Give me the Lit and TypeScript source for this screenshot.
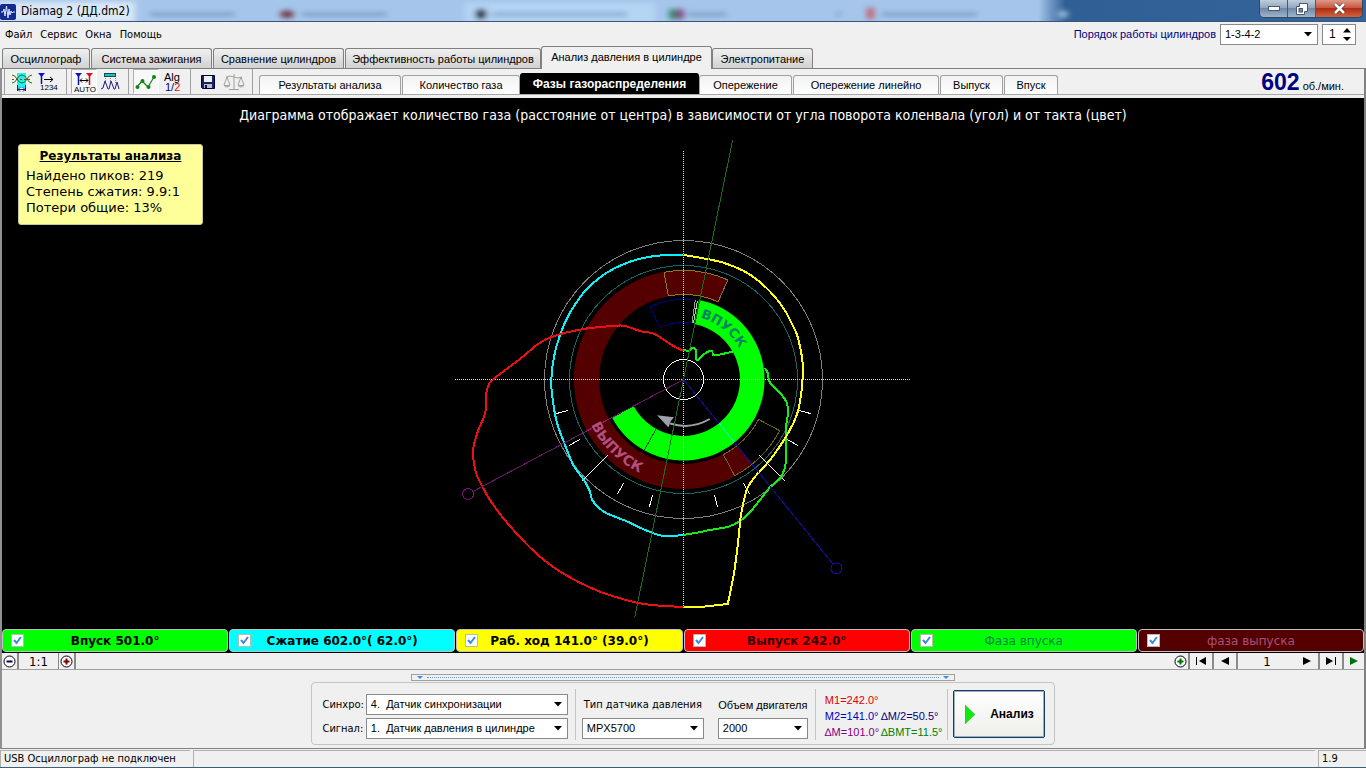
import { LitElement, html, svg, css } from "lit";
import { customElement, property, state } from "lit/decorators.js";
import { classMap } from "lit/directives/class-map.js";

type Pt = [number, number];

const CX = 683.5;
const CY = 379.5;

/** Point at a crank angle, measured clockwise from top dead centre. */
function polar(angle: number, r: number): Pt {
  const a = (angle * Math.PI) / 180;
  return [CX + r * Math.sin(a), CY - r * Math.cos(a)];
}
const fmt = (p: Pt) => `${p[0].toFixed(1)} ${p[1].toFixed(1)}`;

/** Ring sector between two angles, drawn clockwise from `from` to `to`. */
function sector(from: number, to: number, rIn: number, rOut: number): string {
  const large = to - from > 180 ? 1 : 0;
  return (
    `M${fmt(polar(from, rOut))}A${rOut} ${rOut} 0 ${large} 1 ${fmt(polar(to, rOut))}` +
    `L${fmt(polar(to, rIn))}A${rIn} ${rIn} 0 ${large} 0 ${fmt(polar(from, rIn))}Z`
  );
}

/** Smooth curve through measured points (Catmull-Rom to Bezier). */
function curve(pts: Pt[]): string {
  let d = `M${fmt(pts[0])}`;
  for (let i = 0; i < pts.length - 1; i++) {
    const p0 = pts[Math.max(i - 1, 0)];
    const p1 = pts[i];
    const p2 = pts[i + 1];
    const p3 = pts[Math.min(i + 2, pts.length - 1)];
    const c1: Pt = [p1[0] + (p2[0] - p0[0]) / 6, p1[1] + (p2[1] - p0[1]) / 6];
    const c2: Pt = [p2[0] - (p3[0] - p1[0]) / 6, p2[1] - (p3[1] - p1[1]) / 6];
    d += `C${fmt(c1)} ${fmt(c2)} ${fmt(p2)}`;
  }
  return d;
}

const EXHAUST: Pt[] = [
  [683.5, 350.7], [673.3, 346], [656.7, 335], [648.3, 332.3], [640, 331], [625, 326], [616.7, 325.7],
  [593.3, 327.7], [581.7, 329.3], [561.7, 333.7], [546.7, 339], [536.7, 345], [520, 359], [493.3, 379.3],
  [488.3, 386], [486, 395], [485.7, 410], [482.7, 420], [478.3, 430], [473.3, 448.3], [473.7, 461.7],
  [476.7, 475], [483.3, 488.3], [490, 500], [506.7, 522.3], [535, 552.3], [556.7, 569.3], [580, 582.7],
  [600, 591.7], [620, 598.3], [640, 603.3], [663.3, 606], [683.5, 606.7],
];
const POWER: Pt[] = [
  [727.7, 604], [728.6, 600], [734, 573.3], [738.7, 536.7], [740.7, 516.7], [744, 500], [747.3, 488.3],
  [755, 476.7], [770, 460], [784, 440], [793.3, 423.3], [798.3, 410], [801.7, 390], [802.7, 376.7],
  [802.7, 363.3], [800.7, 350], [796.7, 334], [790, 320], [784, 309], [773.3, 295], [758.3, 280.7],
  [743.3, 270.7], [723.3, 262.7], [703.3, 258.3], [683.5, 255],
];
const COMPRESSION: Pt[] = [
  [683.5, 255], [661.7, 255.3], [640, 258.7], [623.3, 264.3], [606.7, 272.7], [590, 285.7], [580, 297.3],
  [568.3, 315.7], [560, 335], [554, 356.7], [551.3, 379.3], [552.3, 396.7], [556.7, 421.7], [565, 445],
  [573.3, 465], [583.3, 479], [589.3, 490], [592.3, 500], [598.3, 507.3], [606.7, 513.3], [626.7, 521.3],
  [640, 527.7], [658.3, 535], [670, 536], [683.5, 535],
];
const INTAKE_OUTER: Pt[] = [
  [683.5, 535], [696.7, 532.7], [710, 530], [728.3, 526.7], [740, 521], [748.3, 514], [760, 500],
  [770, 487.3], [780, 478.3], [784.7, 468.3], [786, 456.7], [785.7, 430], [788, 413.3], [786.7, 402.7],
  [780, 392.7], [770, 382.7], [767.3, 371.7], [764.3, 367.7],
];
const INTAKE_INNER: Pt[] = [
  [734, 351.3], [715, 355.3], [712.3, 351.7], [710, 350.7], [701.7, 356], [698.3, 360], [696.3, 359],
  [696, 350], [692.7, 348], [688.3, 350.7], [683.5, 350],
];

@customElement("phase-diagram")
class PhaseDiagram extends LitElement {
  static styles = css`
    :host { display: block; min-height: 0; }
    .plot { display: block; width: 100%; height: 100%; }
    .thin { fill: none; stroke-width: 1; shape-rendering: crispEdges; }
    .trace { fill: none; stroke-width: 2; shape-rendering: crispEdges; }
    .ring-text { font: bold 13px "DejaVu Sans", Verdana, sans-serif; }
    .ring-text.big { font-size: 14px; }
  `;

  private tick(angle: number) {
    const long = angle === 135 || angle === 225;
    return this.ray(angle, long ? 107 : 120, long ? 144 : 132, "#fff");
  }

  private ray(angle: number, r1: number, r2: number, color: string) {
    const [x1, y1] = polar(angle, r1);
    const [x2, y2] = polar(angle, r2);
    return svg`<line class="thin" stroke=${color} x1=${x1} y1=${y1} x2=${x2} y2=${y2}></line>`;
  }

  render() {
    const [m1x, m1y] = polar(242, 244);
    const [m2x, m2y] = polar(141, 243);
    return html`
      <svg class="plot" viewBox="400 98 566 530" preserveAspectRatio="xMidYMin meet" role="img" aria-label="Фазы газораспределения">
        <defs>
          <path id="arc-in" d="M${fmt(polar(0, 64))}A64 64 0 0 1 ${fmt(polar(120, 64))}"></path>
          <path id="arc-out" d="M${fmt(polar(280, 103))}A103 103 0 0 0 ${fmt(polar(160, 103))}"></path>
        </defs>
        <path d=${sector(141, 384, 84.5, 109.5)} fill="#550000"></path>
        <path d=${sector(11, 242, 56.5, 81)} fill="#00ff00"></path>
        <circle class="thin" stroke="#808080" cx=${CX} cy=${CY} r="139"></circle>
        <circle class="thin" stroke="#1c6464" cx=${CX} cy=${CY} r="114"></circle>
        <path class="thin" stroke="#867a28" d=${sector(-10.3, 24, 85, 109)}></path>
        <path class="thin" stroke="#6b6222" d=${sector(118, 152, 85, 109)}></path>
        <path class="thin" stroke="#000080" d=${sector(-24.7, 8.5, 57, 80)}></path>
        ${this.ray(8.5, 57, 80, "#7fb07f")} ${this.ray(10, 57, 80, "#a0d0a0")}
        ${this.ray(209, 57, 81, "#004400")}
        ${[105, 120, 135, 150, 165, 195, 210, 225, 240, 255].map((a) => this.tick(a))}
        <line class="thin" x1="683.5" y1="151" x2="683.5" y2="608" stroke="#e0e0e0" stroke-dasharray="1 1"></line>
        <line class="thin" x1="455" y1="379.5" x2="911" y2="379.5" stroke="#e0e0e0" stroke-dasharray="1 1"></line>
        <circle class="thin" stroke="#fff" cx=${CX} cy=${CY} r="20"></circle>
        <path d="M709.7 419Q691 430 670 423.5" fill="none" stroke="#a0a0a8" stroke-width="2"></path>
        <path d="M657 415.3L674 417.2L670.5 421.5L668.5 427.5Z" fill="#a0a0a8"></path>
        <path class="trace" stroke="#14ee14" d=${curve(INTAKE_OUTER)}></path>
        <path class="trace" stroke="#14ee14" d=${curve(INTAKE_INNER)}></path>
        <path class="trace" stroke="#10f0f8" d=${curve(COMPRESSION)}></path>
        <path class="trace" stroke="#ffff20" d=${"M683.5 606.7L703.3 606.7L727.7 604" + curve(POWER).slice(1).replace(/^[\d.]+ [\d.]+/, "")}></path>
        <path class="trace" stroke="#ee1010" d=${curve(EXHAUST)}></path>
        ${this.ray(11.6, 0, 244, "#1d6b1d")} ${this.ray(191.6, 0, 243, "#1d6b1d")}
        ${this.ray(242, 0, 239, "#6a1a6a")} ${this.ray(141, 0, 238, "#1010a0")}
        ${this.ray(242, 84.5, 109.5, "#a01070")} ${this.ray(141, 56.5, 81, "#20f0c0")}
        <circle class="thin" stroke="#701a70" cx=${m1x} cy=${m1y} r="5.5"></circle>
        <circle class="thin" stroke="#1010a0" cx=${m2x} cy=${m2y} r="5.5"></circle>
        <text class="ring-text" fill="#008066"><textPath href="#arc-in" startOffset="17">ВПУСК</textPath></text>
        <text class="ring-text big" fill="#b05080"><textPath href="#arc-out" startOffset="65">ВЫПУСК</textPath></text>
      </svg>
    `;
  }
}

@customElement("combo-box")
class ComboBox extends LitElement {
  static styles = css`
    :host { display: grid; }
    .box { display: grid; align-items: center; }
    .field {
      grid-area: 1 / 1; appearance: none; box-sizing: border-box; width: 100%; height: 21px; margin: 0;
      padding: 0 20px 1px 4px; border: 1px solid #8a8a8a; border-radius: 0; background: #fff; color: #000;
      font: 11px "Liberation Sans", Arial, sans-serif;
    }
    .arrow { grid-area: 1 / 1; justify-self: end; margin-right: 6px; pointer-events: none; }
  `;
  @property() label = "";
  @property() value = "";

  render() {
    return html`<div class="box">
      <select class="field" aria-label=${this.label}><option>${this.value}</option></select>
      <svg class="arrow" width="8" height="5" viewBox="0 0 8 5"><path d="M0 0h8L4 4.500z"></path></svg>
    </div>`;
  }
}

const glyphs: Record<string, unknown> = {
  average: svg`<rect x="7" y="3" width="9" height="15" fill="#20f0f0"/><path d="M2 5q3 0 5 4t5 4t5-4t5-4M2 13q3 0 5-4t5-4t5 4t5 4" fill="none" stroke="#187818"/><path d="M2 9.500h20" stroke="#c02020" stroke-dasharray="2 2"/><path d="M7.500 15v6M15.500 15v6M8 19.500h7M10 17.500l-2 2l2 2M13 17.500l2 2l-2 2" fill="none" stroke="#102080"/>`,
  order: svg`<path d="M2 3h7l-3.500 4z" fill="#1010d0"/><path d="M5.500 5v9" stroke="#1010a0" stroke-width="1.500"/><path d="M8 9.500h9M14 7l3 2.500l-3 2.500" fill="none" stroke="#000"/><text x="4" y="20" class="tiny">1234</text>`,
  auto: svg`<path d="M3 3h7l-3.500 4z" fill="#1010d0"/><path d="M6.500 5v10" stroke="#1010a0" stroke-width="1.500"/><path d="M14 3h7l-3.500 4z" fill="#e01010"/><path d="M17.500 5v10" stroke="#d01010" stroke-width="1.500"/><path d="M8 10.500h8M10 8.500l-2 2l2 2M14 8.500l2 2l-2 2" fill="none" stroke="#000"/><text x="2" y="22" class="tiny">AUTO</text>`,
  peaks: svg`<rect x="6.500" y="3.500" width="11" height="3" fill="#20c0c0" stroke="#105050"/><path d="M7.500 8v6M12.500 8v6M17.500 8v6" stroke="#888" stroke-dasharray="1 1"/><path d="M3 19l2-1l2-7l3 8h1l2-8l3 8h1l2-7l2 7" fill="none" stroke="#202080"/>`,
  chart: svg`<path d="M3 17l5-6l6 6l6-10" fill="none" stroke="#208020" stroke-width="1.200"/><g fill="#0c880c"><circle cx="3.500" cy="17" r="2"/><circle cx="8.500" cy="11" r="2"/><circle cx="14.500" cy="17" r="2"/><circle cx="20" cy="7" r="2"/></g>`,
  alg: svg`<text x="4" y="11" class="small">Alg</text><text x="5" y="21" class="small" fill="#000080">1/<tspan fill="#d01010">2</tspan></text>`,
  save: svg`<path d="M5.500 5.500h13v13h-12l-1-1z" fill="#202060" stroke="#000030"/><rect x="8" y="6" width="8" height="6" fill="#e8f0f0"/><rect x="8" y="14" width="8" height="4" fill="#b8c0d0"/><rect x="9" y="15" width="2" height="3" fill="#101040"/>`,
  scales: svg`<path d="M12 4v15M7 19.500h10M4 7q4-2 8 0t8 0M5 7l-3 8M5 7l3 8M19 7l-3 8M19 7l3 8M2 15.500h6M16 15.500h6" fill="none" stroke="#a0a0a0"/><path d="M2 16q3 3 6 0zM16 16q3 3 6 0z" fill="#b4b4b4"/>`,
};

@customElement("app-root")
class AppRoot extends LitElement {
  static styles = css`
    :host {
      display: flex; flex-direction: column; height: 100vh; overflow: hidden; background: #f0f0f0; color: #000;
      font: 11px "Liberation Sans", Arial, sans-serif;
    }
    button { font: inherit; color: inherit; margin: 0; padding: 0; }

    .titlebar {
      display: flex; align-items: center; box-sizing: border-box; height: 22px; flex: none; overflow: hidden;
      border-bottom: 1px solid #3c5478; background: linear-gradient(90deg, #a5c6ea 76%, #2f5f95 78%, #33649a 100%);
      position: relative;
    }
    .glow { position: absolute; inset: 0; width: 100%; height: 100%; }
    .app-icon { position: relative; margin: 2px 5px 0 0; }
    .title { position: relative; flex: 1; font: 12px "DejaVu Sans Condensed", Tahoma, sans-serif; margin: 0; }
    .winbtns { position: relative; display: flex; align-self: flex-start; margin-right: 3px; border: 1px solid #33475f; border-top: 0; border-radius: 0 0 5px 5px; overflow: hidden; }
    .win { display: grid; place-items: center; width: 28px; height: 17px; border: 0; border-right: 1px solid #44597a; background: linear-gradient(#c0cddc, #90a4bc 48%, #6f89a8 50%, #9fb4cb); }
    .win.close { width: 46px; border-right: 0; background: linear-gradient(#dc9a88, #c8523c 48%, #b02c14 50%, #d06440); }

    .menubar { display: flex; align-items: center; height: 24px; flex: none; padding: 0 10px 0 5px; }
    .menu { display: flex; flex: 1; gap: 8px; font: 11px "DejaVu Sans Condensed", Tahoma, sans-serif; }
    .menu button { border: 0; background: none; }
    .order { display: flex; align-items: center; gap: 4px; color: #000080; font-size: 11px; }
    .order combo-box { width: 98px; }
    .spin { display: grid; align-items: center; width: 34px; color: #000; }
    .spin input { grid-area: 1 / 1; box-sizing: border-box; width: 100%; height: 21px; border: 1px solid #8a8a8a; background: #fff; padding: 0 14px 0 6px; font: inherit; font-size: 12px; appearance: textfield; }
    .spin input::-webkit-inner-spin-button { appearance: none; }
    .spin svg { grid-area: 1 / 1; justify-self: end; margin-right: 5px; pointer-events: none; }

    .tabs { display: flex; align-items: flex-end; flex: none; height: 22px; padding-left: 2px; border-bottom: 1px solid #808080; }
    .tab {
      box-sizing: border-box; height: 20px; border: 1px solid #808080; border-bottom: 0; border-radius: 3px 3px 0 0;
      background: linear-gradient(#f0f0f0, #d2d2d2); margin-right: 1px; white-space: nowrap; overflow: hidden;
    }
    .tab:nth-child(1) { width: 88px; }
    .tab:nth-child(2) { width: 121px; }
    .tab:nth-child(3) { width: 131px; }
    .tab:nth-child(4) { width: 196px; margin-right: 0; }
    .tab:nth-child(5) { width: 171px; margin-right: 0; }
    .tab:nth-child(6) { width: 101px; }
    .tab.active { height: 23px; margin-bottom: -1px; background: #f0f0f0; padding-bottom: 3px; }

    .frame { display: flex; flex-direction: column; flex: 1; min-height: 0; border: 1px solid #808080; border-top: 0; border-left-width: 2px; border-right-width: 2px; border-left-color: #909090; }
    .tools { display: flex; flex: none; height: 25px; border-bottom: 1px solid #a8a8a8; margin-bottom: 3px; align-items: flex-end; }
    .group { display: flex; align-items: center; height: 25px; padding: 0 5px 0 4px; border-left: 1px solid #a0a0a0; }
    .group.first { margin-left: 2px; }
    .group.end { padding: 0 6px 0 0; }
    .tool { display: grid; place-items: center; width: 26px; height: 25px; border: 1px solid transparent; background: none; box-sizing: border-box; }
    .tool.on { background: #f8f8f8; border-color: #b0b0b0 #fff #fff #b0b0b0; }
    .tiny { font: 8px "Liberation Sans", Arial, sans-serif; }
    .small { font: 11px "Liberation Sans", Arial, sans-serif; }
    .subtabs { display: flex; align-items: flex-end; flex: 1; }
    .sub {
      box-sizing: border-box; height: 19px; border: 1px solid #a0a0a0; border-bottom: 0; border-radius: 3px 3px 0 0;
      background: linear-gradient(#f2f2f2, #fff); margin-right: 1px; white-space: nowrap; overflow: hidden;
    }
    .sub:nth-child(1) { width: 142px; }
    .sub:nth-child(2) { width: 118px; margin-right: 0; }
    .sub:nth-child(3) { width: 179px; margin-right: 0; }
    .sub:nth-child(4) { width: 93px; }
    .sub:nth-child(5) { width: 146px; }
    .sub:nth-child(6) { width: 63px; }
    .sub:nth-child(7) { width: 54px; }
    .sub.active { height: 21px; background: #000; color: #fff; border-color: #000; font-weight: bold; font-size: 12px; }
    .rpm { display: flex; align-items: baseline; gap: 3px; margin: 0 20px 0 0; align-self: center; }
    .rpm b { color: #000080; font-size: 23px; line-height: 24px; }

    .canvas { display: grid; flex: 1; min-height: 0; background: #000; position: relative; font-family: "DejaVu Sans", Verdana, sans-serif; }
    .canvas phase-diagram { grid-area: 1 / 1; }
    .caption { grid-area: 1 / 1; margin: 0; padding-top: 9px; color: #fff; font: 14px "DejaVu Sans Condensed", Verdana, sans-serif; line-height: 16px; text-align: center; z-index: 1; justify-self: center; align-self: start; }
    .results { position: absolute; left: 16px; top: 46px; box-sizing: border-box; width: 185px; height: 81px; padding: 3px 7px; border: 1px solid #c8c8a0; border-radius: 3px; background: #ffff99; font-size: 13px; line-height: 16px; }
    .results h2 { margin: 0 0 4px; font-size: 12px; line-height: 16px; text-align: center; text-decoration: underline; }
    .results p { margin: 0; }

    .legend { display: grid; grid-template-columns: repeat(6, 1fr); flex: none; gap: 1px; padding: 1px 0; background: #000; font: 12px "DejaVu Sans", Verdana, sans-serif; }
    .key { display: grid; align-items: center; box-sizing: border-box; height: 23px; border: 1px solid #c0c0c0; border-radius: 4px; }
    .key span { grid-area: 1 / 1; justify-self: center; }
    .key input { grid-area: 1 / 1; appearance: none; width: 13px; height: 13px; margin: 0 0 0 8px; background: #fff; border: 1px solid #b0c0b0; }
    .key svg { grid-area: 1 / 1; margin-left: 10px; pointer-events: none; }
    .intake { background: #00ff00; font-weight: bold; }
    .compression { background: #00ffff; font-weight: bold; }
    .power { background: #ffff00; font-weight: bold; }
    .exhaust { background: #ff0000; font-weight: bold; color: #300000; }
    .intake-phase { background: #00ff00; color: #008055; }
    .exhaust-phase { background: #550000; color: #a85078; }

    .pager { display: flex; flex: none; height: 16px; border-bottom: 1px solid #a0a0a0; font: 13px "DejaVu Sans Condensed", Tahoma, sans-serif; }
    .pager .space { flex: 1; }
    .pager button { display: grid; place-items: center; border: 0; border-right: 2px solid #8a8a8a; background: #f0f0f0; width: 24px; }
    .pager .zoom { width: 17px; }
    .pager output { display: grid; place-items: center; }
    .pager .ratio { width: 39px; border-right: 1px solid #8a8a8a; }
    .pager .page { width: 58px; }
    .pager .last { border-right: 0; width: 20px; }

    .panel { display: flex; flex-direction: column; align-items: center; flex: none; height: 78px; box-sizing: border-box; padding-top: 4px; }
    .splitter { display: flex; align-items: center; box-sizing: border-box; width: 40%; height: 7px; border: 1px solid #a0a0a0; padding: 0 5px; gap: 4px; }
    .splitter i { flex: 1; border-top: 1px dotted #60a0e0; }
    .controls { display: flex; box-sizing: border-box; height: 63px; border: 1px solid #c4c4c4; border-radius: 4px; padding: 6px 9px 4px 11px; margin-top: 1px; }
    .channels { display: grid; grid-template-columns: auto 202px; column-gap: 2px; row-gap: 3px; align-content: center; align-items: center; padding: 4px 7px 0 0; }
    .label { font: 11px "DejaVu Sans Condensed", Tahoma, sans-serif; }
    .stack { display: grid; grid-template-rows: 21px 21px; row-gap: 3px; align-content: center; align-items: center; justify-items: center; padding: 4px 7px 0 6px; border-left: 1px solid #c4c4c4; white-space: nowrap; }
    .stack.engine { border-left: 0; padding-left: 7px; }
    .stack.sensor combo-box { width: 122px; }
    .stack.engine combo-box { width: 90px; }
    .marks { display: grid; grid-template-columns: auto auto; column-gap: 2px; align-content: center; border-left: 1px solid #c4c4c4; border-right: 1px solid #c4c4c4; padding: 2px 5px 0 9px; line-height: 16px; }
    .marks span { white-space: nowrap; }
    .m1 { color: #e00000; grid-column: 1 / 3; }
    .m2 { color: #0000c0; }
    .half { color: #000080; }
    .dm { color: #800080; }
    .bmt { color: #008000; }
    .run { display: flex; align-items: center; justify-content: center; gap: 15px; width: 92px; height: 48px; margin: 1px 0 0 5px; border: 1px solid #163a60; border-radius: 2px; background: linear-gradient(#fff, #eeeeea); font-weight: bold; font-size: 12px; white-space: nowrap; box-shadow: inset 0 0 0 1px #9cb0c4; }

    .status { display: flex; flex: none; height: 17px; gap: 3px; padding-top: 1px; font: 11px "DejaVu Sans Condensed", Tahoma, sans-serif; line-height: 16px; border-bottom: 1px solid #3c6078; }
    .status div { border: solid #b0b0b0; border-width: 1px 0 0 1px; padding-left: 3px; box-sizing: border-box; }
    .status .usb { width: 190px; }
    .status .fill { flex: 1; }
    .status .ver { width: 48px; }
  `;

  @state() private tab = 4;
  @state() private sub = 2;

  private tabs = ["Осциллограф", "Система зажигания", "Сравнение цилиндров", "Эффективность работы цилиндров", "Анализ давления в цилиндре", "Электропитание"];
  private subs = ["Результаты анализа", "Количество газа", "Фазы газораспределения", "Опережение", "Опережение линейно", "Выпуск", "Впуск"];
  private toolGroups: [string, string, boolean][][] = [
    [["average", "Усреднение", false], ["order", "Порядок", false]],
    [["auto", "Авто", true], ["peaks", "Пики", false]],
    [["chart", "График", true], ["alg", "Алгоритм", false]],
    [["save", "Сохранить", false], ["scales", "Сравнить", false]],
  ];
  private legend: [string, string][] = [
    ["intake", "Впуск 501.0°"],
    ["compression", "Сжатие 602.0°( 62.0°)"],
    ["power", "Раб. ход 141.0° (39.0°)"],
    ["exhaust", "Выпуск 242.0°"],
    ["intake-phase", "Фаза впуска"],
    ["exhaust-phase", "фаза выпуска"],
  ];

  private titlebar() {
    return html`<header class="titlebar">
      <svg class="glow" viewBox="0 0 1366 22" preserveAspectRatio="none">
        <defs><filter id="soft" x="-20%" y="-80%" width="140%" height="260%"><feGaussianBlur stdDeviation="3"></feGaussianBlur></filter></defs>
        <g filter="url(#soft)">
          <rect x="-10" y="2" width="145" height="22" fill="#fff" opacity=".6"></rect>
          <rect x="465" y="3" width="190" height="22" fill="#bcdcfa" opacity=".7"></rect>
          <g fill="#5c7ea6" opacity=".55">
            <rect x="150" y="13" width="85" height="4"></rect><rect x="302" y="13" width="85" height="4"></rect>
            <rect x="492" y="13" width="135" height="4"></rect><rect x="688" y="13" width="38" height="4"></rect>
            <rect x="882" y="13" width="95" height="4"></rect><rect x="836" y="13" width="5" height="4"></rect>
          </g>
          <ellipse cx="287" cy="15" rx="7" ry="4" fill="#703040"></ellipse>
          <ellipse cx="481" cy="15" rx="6" ry="6" fill="#203040"></ellipse>
          <ellipse cx="673" cy="15" rx="4" ry="6" fill="#208060"></ellipse>
          <ellipse cx="680" cy="15" rx="4" ry="6" fill="#804080"></ellipse>
          <rect x="867" y="8" width="7" height="12" fill="#c06070"></rect>
          <ellipse cx="1063" cy="15" rx="5" ry="4" fill="#a0c0e0"></ellipse>
        </g>
      </svg>
      <svg class="app-icon" width="16" height="16" viewBox="0 0 16 16"><rect width="16" height="16" rx="2" fill="#142a8c"></rect><path d="M1 8h2l1-3l1 7l1.500-10l1.500 12l1-9l1 6l1-4l1 2l1-1h2" fill="none" stroke="#d8e8ff"></path></svg>
      <h1 class="title">Diamag 2 (ДД.dm2)</h1>
      <div class="winbtns">
        <button class="win" aria-label="Свернуть"><svg width="12" height="5" viewBox="0 0 12 5"><rect x=".5" y=".5" width="11" height="4" fill="#fff" stroke="#4a5a70"></rect></svg></button>
        <button class="win" aria-label="Восстановить"><svg width="12" height="12" viewBox="0 0 12 12"><path d="M3.500 .5h8v8h-3v3h-8v-8h3z" fill="#fff" stroke="#4a5a70"></path><rect x="3" y="5.500" width="3.500" height="3.500" fill="#6f89a8" stroke="#4a5a70"></rect></svg></button>
        <button class="win close" aria-label="Закрыть"><svg width="13" height="11" viewBox="0 0 13 11"><path d="M2 1l9 9M11 1l-9 9" stroke="#5a3030" stroke-width="4"></path><path d="M2 1l9 9M11 1l-9 9" stroke="#fff" stroke-width="2.500"></path></svg></button>
      </div>
    </header>`;
  }

  render() {
    return html`
      ${this.titlebar()}
      <div class="menubar">
        <nav class="menu">${["Файл", "Сервис", "Окна", "Помощь"].map((m) => html`<button>${m}</button>`)}</nav>
        <div class="order">
          <span>Порядок работы цилиндров</span>
          <combo-box label="Порядок работы цилиндров" value="1-3-4-2"></combo-box>
          <span class="spin">
            <input type="number" value="1" aria-label="Цилиндр" />
            <svg width="8" height="13" viewBox="0 0 8 13"><path d="M0 4.500L4 0l4 4.500zM0 9h8l-4 4z"></path></svg>
          </span>
        </div>
      </div>
      <div class="tabs" role="tablist">
        ${this.tabs.map((t, i) => html`<button role="tab" class=${classMap({ tab: true, active: i === this.tab })} @click=${() => (this.tab = i)}>${t}</button>`)}
      </div>
      <main class="frame">
        <div class="tools">
          ${this.toolGroups.map(
            (g, i) => html`<div class=${classMap({ group: true, first: i === 0 })}>
              ${g.map(([id, name, on]) => html`<button class=${classMap({ tool: true, on })} aria-label=${name}><svg width="24" height="24" viewBox="0 0 24 24">${glyphs[id]}</svg></button>`)}
            </div>`
          )}
          <div class="group end"></div>
          <div class="subtabs" role="tablist">
            ${this.subs.map((t, i) => html`<button role="tab" class=${classMap({ sub: true, active: i === this.sub })} @click=${() => (this.sub = i)}>${t}</button>`)}
          </div>
          <p class="rpm"><b>602</b><span>об./мин.</span></p>
        </div>
        <section class="canvas">
          <phase-diagram></phase-diagram>
          <p class="caption">Диаграмма отображает количество газа (расстояние от центра) в зависимости от угла поворота коленвала (угол) и от такта (цвет)</p>
          <aside class="results">
            <h2>Результаты анализа</h2>
            <p>Найдено пиков: 219</p>
            <p>Степень сжатия: 9.9:1</p>
            <p>Потери общие: 13%</p>
          </aside>
        </section>
        <div class="legend">
          ${this.legend.map(
            ([cls, text]) => html`<label class="key ${cls}"><input type="checkbox" checked /><svg width="9" height="9" viewBox="0 0 9 9"><path d="M1 4l2.500 3L8 1" fill="none" stroke="#3c8cdc" stroke-width="2"></path></svg><span>${text}</span></label>`
          )}
        </div>
        <div class="pager">
          <button class="zoom" aria-label="Уменьшить"><svg width="13" height="13" viewBox="0 0 13 13"><circle cx="6.500" cy="6.500" r="5.500" fill="#fff" stroke="#000"></circle><path d="M3.500 6.500h6" stroke="#000060" stroke-width="2"></path></svg></button>
          <output class="ratio">1:1</output>
          <button class="zoom" aria-label="Увеличить"><svg width="13" height="13" viewBox="0 0 13 13"><circle cx="6.500" cy="6.500" r="5.500" fill="#fff" stroke="#000"></circle><path d="M3.500 6.500h6M6.500 3.500v6" stroke="#800000" stroke-width="2"></path></svg></button>
          <span class="space"></span>
          <button class="zoom" aria-label="Добавить"><svg width="13" height="13" viewBox="0 0 13 13"><circle cx="6.500" cy="6.500" r="5.500" fill="#fff" stroke="#000"></circle><path d="M3.500 6.500h6M6.500 3.500v6" stroke="#007000" stroke-width="2"></path></svg></button>
          <button aria-label="Первая"><svg width="10" height="8" viewBox="0 0 10 8"><path d="M0 0h1v8H0zM10 0v8L3 4z"></path></svg></button>
          <button aria-label="Назад"><svg width="8" height="8" viewBox="0 0 8 8"><path d="M8 0v8L0 4z"></path></svg></button>
          <output class="page">1</output>
          <button aria-label="Вперёд"><svg width="8" height="8" viewBox="0 0 8 8"><path d="M0 0v8L8 4z"></path></svg></button>
          <button aria-label="Последняя"><svg width="10" height="8" viewBox="0 0 10 8"><path d="M9 0h1v8H9zM0 0v8L7 4z"></path></svg></button>
          <button class="last" aria-label="Пуск"><svg width="8" height="8" viewBox="0 0 8 8"><path d="M0 0v8L8 4z" fill="#007000"></path></svg></button>
        </div>
        <div class="panel">
          <div class="splitter"><svg width="6" height="3" viewBox="0 0 6 3"><path d="M0 0h6L3 3z" fill="#3c8cdc"></path></svg><i></i><svg width="6" height="3" viewBox="0 0 6 3"><path d="M0 0h6L3 3z" fill="#3c8cdc"></path></svg></div>
          <div class="controls">
            <div class="channels">
              <span class="label">Синхро:</span><combo-box label="Синхро" value="4.&nbsp; Датчик синхронизации"></combo-box>
              <span class="label">Сигнал:</span><combo-box label="Сигнал" value="1.&nbsp; Датчик давления в цилиндре"></combo-box>
            </div>
            <div class="stack sensor"><span class="label">Тип датчика давления</span><combo-box label="Тип датчика давления" value="MPX5700"></combo-box></div>
            <div class="stack engine"><span>Объем двигателя</span><combo-box label="Объем двигателя" value="2000"></combo-box></div>
            <div class="marks">
              <span class="m1">M1=242.0°</span>
              <span class="m2">M2=141.0°</span><span class="half">∆M/2=50.5°</span>
              <span class="dm">∆M=101.0°</span><span class="bmt">∆BMT=11.5°</span>
            </div>
            <button class="run"><svg width="10" height="19" viewBox="0 0 10 19"><path d="M0 0v19L10 9.500z" fill="#10e810" stroke="#40a040" stroke-width=".5"></path></svg>Анализ</button>
          </div>
        </div>
      </main>
      <footer class="status"><div class="usb">USB Осциллограф не подключен</div><div class="fill"></div><div class="ver">1.9</div></footer>
    `;
  }
}
